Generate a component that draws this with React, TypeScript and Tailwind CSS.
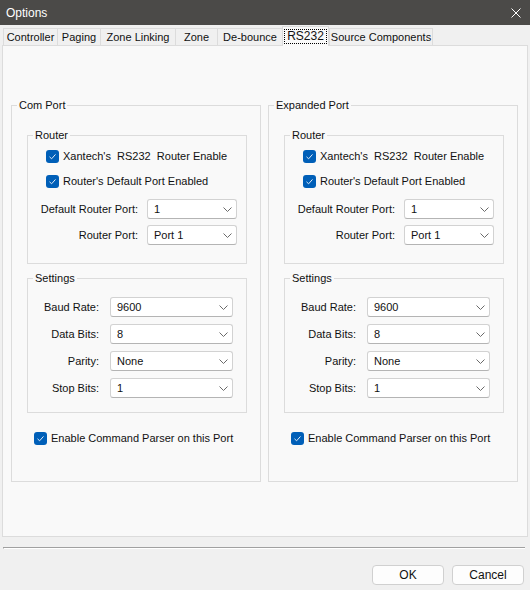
import type { ReactNode } from 'react'

const tabs = [
  { name: 'Controller', w: 'w-[54px]' },
  { name: 'Paging', w: 'w-[43px]' },
  { name: 'Zone Linking', w: 'w-[75px]' },
  { name: 'Zone', w: 'w-[42px]' },
  { name: 'De-bounce', w: 'w-[65px]' },
  { name: 'RS232', w: 'w-[47px]', active: true },
  { name: 'Source Components', w: 'w-[104px]' },
]

function Check({ label }: { label: string }) {
  return (
    <div className="h-[16px] flex items-center gap-[4px]">
      <span className="w-[13px] h-[13px] rounded-[3px] bg-[#005fb8] flex items-center justify-center shrink-0">
        <svg width="9" height="9" viewBox="0 0 9 9" fill="none">
          <path d="M1.5 4.8 L3.6 6.8 L7.5 2.4" stroke="#dfeaf7" strokeWidth="1" />
        </svg>
      </span>
      <span className="whitespace-pre">{label}</span>
    </div>
  )
}

function Combo({ value, w }: { value: string; w: string }) {
  return (
    <div
      className={`${w} h-[20px] bg-white border border-[#d2d2d2] border-b-[#b4b4b4] rounded-[3px] flex items-center justify-between pl-[6px] pr-[4px]`}
    >
      <span>{value}</span>
      <svg width="9" height="5" viewBox="0 0 9 5" fill="none">
        <path d="M0.5 0.5 L4.5 4.5 L8.5 0.5" stroke="#6a6a6a" strokeWidth="1" />
      </svg>
    </div>
  )
}

function Group({ label, className, children }: { label: string; className: string; children: ReactNode }) {
  return (
    <div className={`relative border border-[#dcdcdc] ${className}`}>
      <span className="absolute -top-[8px] left-[5px] px-[2px] bg-[#f9f9f9] leading-[14px]">{label}</span>
      {children}
    </div>
  )
}

function PortPanel({ title }: { title: string }) {
  return (
    <Group label={title} className="w-[250px] h-[377px]">
      <Group label="Router" className="ml-[15px] mt-[29px] w-[220px] h-[129px]">
        <div className="pl-[18px] pt-[12px] flex flex-col">
          <Check label="Xantech's  RS232  Router Enable" />
          <div className="mt-[9px]">
            <Check label="Router's Default Port Enabled" />
          </div>
        </div>
        <div className="mt-[10px] flex items-center">
          <span className="w-[110px] text-right">Default Router Port:</span>
          <div className="ml-[9px]">
            <Combo value="1" w="w-[90px]" />
          </div>
        </div>
        <div className="mt-[6px] flex items-center">
          <span className="w-[110px] text-right">Router Port:</span>
          <div className="ml-[9px]">
            <Combo value="Port 1" w="w-[90px]" />
          </div>
        </div>
      </Group>
      <Group label="Settings" className="ml-[15px] mt-[14px] w-[220px] h-[135px]">
        <div className="pt-[18px] flex flex-col gap-[7px]">
          {[
            ['Baud Rate:', '9600'],
            ['Data Bits:', '8'],
            ['Parity:', 'None'],
            ['Stop Bits:', '1'],
          ].map(([l, v]) => (
            <div key={l} className="flex items-center">
              <span className="w-[71px] text-right">{l}</span>
              <div className="ml-[11px]">
                <Combo value={v} w="w-[123px]" />
              </div>
            </div>
          ))}
        </div>
      </Group>
      <div className="ml-[22px] mt-[17px]">
        <Check label="Enable Command Parser on this Port" />
      </div>
    </Group>
  )
}

export default function App() {
  return (
    <div className="w-[530px] h-[590px] bg-[#f0f0f0] flex flex-col font-['Liberation_Sans',Arial,sans-serif] text-[11px] text-[#111] overflow-hidden">
      <div className="h-[25px] shrink-0 bg-[#4b4a48] flex items-center justify-between pl-[6px] pr-[9px] text-white text-[12px]">
        <span>Options</span>
        <svg width="10" height="10" viewBox="0 0 10 10" fill="none">
          <path d="M0.5 0.5 L9.5 9.5 M9.5 0.5 L0.5 9.5" stroke="#ffffff" strokeWidth="1" />
        </svg>
      </div>

      <div className="h-[20px] shrink-0 flex items-end pl-[3px]">
        {tabs.map(t =>
          t.active ? (
            <div
              key={t.name}
              className={`${t.w} h-[20px] -mb-px relative z-10 bg-[#f9f9f9] border border-b-0 border-[#dcdcdc] flex items-center justify-center text-[12px]`}
            >
              <span className="border border-dotted border-black px-[2px] leading-[13px]">{t.name}</span>
            </div>
          ) : (
            <div
              key={t.name}
              className={`${t.w} h-[17px] bg-[#f0f0f0] border border-b-0 border-r-0 border-[#dcdcdc] flex items-center justify-center last:border-r`}
            >
              {t.name}
            </div>
          )
        )}
      </div>

      <div className="ml-[2px] w-[526px] h-[492px] shrink-0 bg-[#f9f9f9] border border-[#dcdcdc] flex gap-[7px] pl-[8px] pt-[59px]">
        <PortPanel title="Com Port" />
        <PortPanel title="Expanded Port" />
      </div>

      <div className="mt-[10px] ml-[3px] w-[522px] h-[2px] border-t border-l border-[#a0a0a0] border-b border-b-white" />

      <div className="mt-[16px] flex justify-end gap-[8px] pr-[6px]">
        <button className="w-[72px] h-[20px] bg-[#fdfdfd] border border-[#d0d0d0] rounded-[4px] text-[12px]">OK</button>
        <button className="w-[72px] h-[20px] bg-[#fdfdfd] border border-[#d0d0d0] rounded-[4px] text-[12px]">Cancel</button>
      </div>
    </div>
  )
}
